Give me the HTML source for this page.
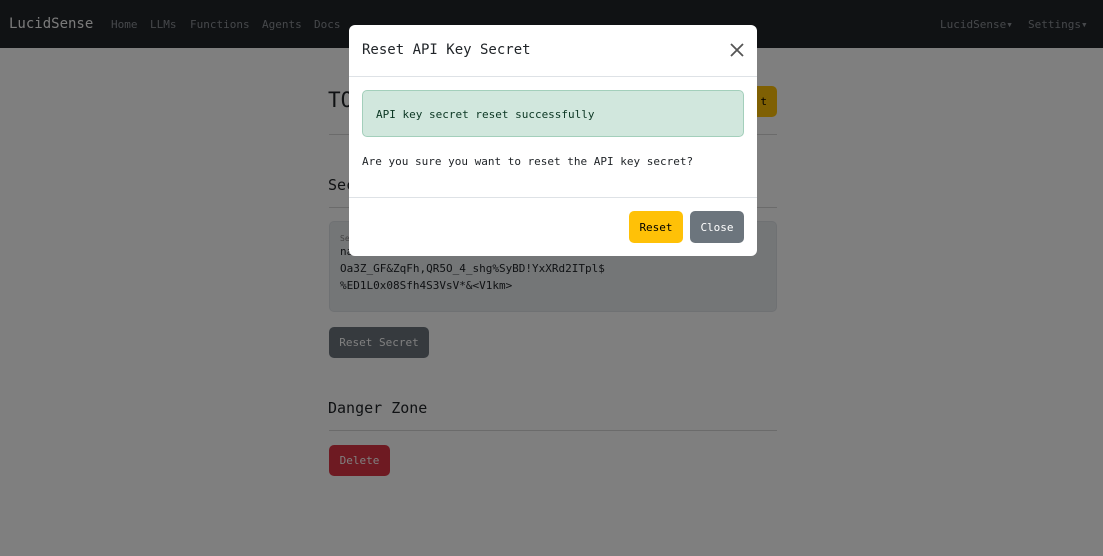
<!DOCTYPE html>
<html><head><style>
*{box-sizing:border-box;margin:0;padding:0}
html,body{width:1103px;height:556px;overflow:hidden;background:#fff}
body{font-family:"DejaVu Sans Mono","Liberation Mono",monospace;position:relative}
.nav{position:absolute;left:0;top:0;width:1103px;height:48px;background:#212529}
.nav span{position:absolute;top:18px;font-size:11px;color:#8c9096}
.abs{position:absolute}
.hr{position:absolute;left:329px;width:448px;height:1px;background:#d6d6d6}
.overlay{position:absolute;left:0;top:0;width:1103px;height:556px;background:rgba(0,0,0,0.5)}
.modal{position:absolute;left:349px;top:25px;width:408px;height:231px;background:#fff;border-radius:6px;overflow:hidden}
.btn{position:absolute;border-radius:5px;font-size:11px;text-align:center}
</style></head><body>
<div class="nav">
<div class="abs" style="left:9px;top:16px;font-size:14px;color:#f4f4f4">LucidSense</div>
<span style="left:111px">Home</span><span style="left:150px">LLMs</span><span style="left:190px">Functions</span><span style="left:262px">Agents</span><span style="left:314px">Docs</span>
<span style="left:940px">LucidSense▾</span><span style="left:1028px">Settings▾</span>
</div>
<div class="abs" style="left:328px;top:88px;font-size:21px;color:#212529">TO</div>
<div class="btn" style="left:740px;top:86px;width:37px;height:31px;background:#ffc107;color:#000;line-height:31px;text-align:right;padding-right:10px">t</div>
<div class="hr" style="top:134px"></div>
<div class="abs" style="left:328px;top:176px;font-size:15px;color:#212529">Sec</div>
<div class="hr" style="top:207px"></div>
<div class="abs" style="left:329px;top:221px;width:448px;height:91px;background:#e9ecef;border:1px solid #dee2e6;border-radius:5px;padding:21px 10px 0;font-size:11px;line-height:17px;color:#212529"><div class="abs" style="left:10px;top:8px;font-size:8px;color:#888">Secret</div>na<br>Oa3Z_GF&amp;ZqFh,QR5O_4_shg%SyBD!YxXRd2ITpl$<br>%ED1L0x08Sfh4S3VsV*&amp;&lt;V1km&gt;</div>
<div class="btn" style="left:329px;top:327px;width:100px;height:31px;background:#6c757d;color:#fff;line-height:31px">Reset Secret</div>
<div class="abs" style="left:328px;top:399px;font-size:15px;color:#212529">Danger Zone</div>
<div class="hr" style="top:430px"></div>
<div class="btn" style="left:329px;top:445px;width:61px;height:31px;background:#dc3545;color:#fff;line-height:31px">Delete</div>
<div class="overlay"></div>
<div class="modal">
<div class="abs" style="left:13px;top:17px;font-size:14px;color:#212529">Reset API Key Secret</div>
<svg class="abs" style="left:381px;top:18px" width="14" height="14"><path d="M1 1L13 13M13 1L1 13" stroke="#555" stroke-width="1.8"/></svg>
<div class="abs" style="left:0;top:51px;width:408px;height:1px;background:#dee2e6"></div>
<div class="abs" style="left:13px;top:65px;width:382px;height:47px;background:#d1e7dd;border:1px solid #a3cfbb;border-radius:5px;padding:0 13px;line-height:47px;font-size:11px;color:#0a3622">API key secret reset successfully</div>
<div class="abs" style="left:13px;top:130px;font-size:11px;color:#212529">Are you sure you want to reset the API key secret?</div>
<div class="abs" style="left:0;top:172px;width:408px;height:1px;background:#dee2e6"></div>
<div class="btn" style="left:280px;top:186px;width:54px;height:32px;background:#ffc107;color:#000;line-height:33px">Reset</div>
<div class="btn" style="left:341px;top:186px;width:54px;height:32px;background:#6c757d;color:#fff;line-height:33px">Close</div>
</div>
</body></html>
